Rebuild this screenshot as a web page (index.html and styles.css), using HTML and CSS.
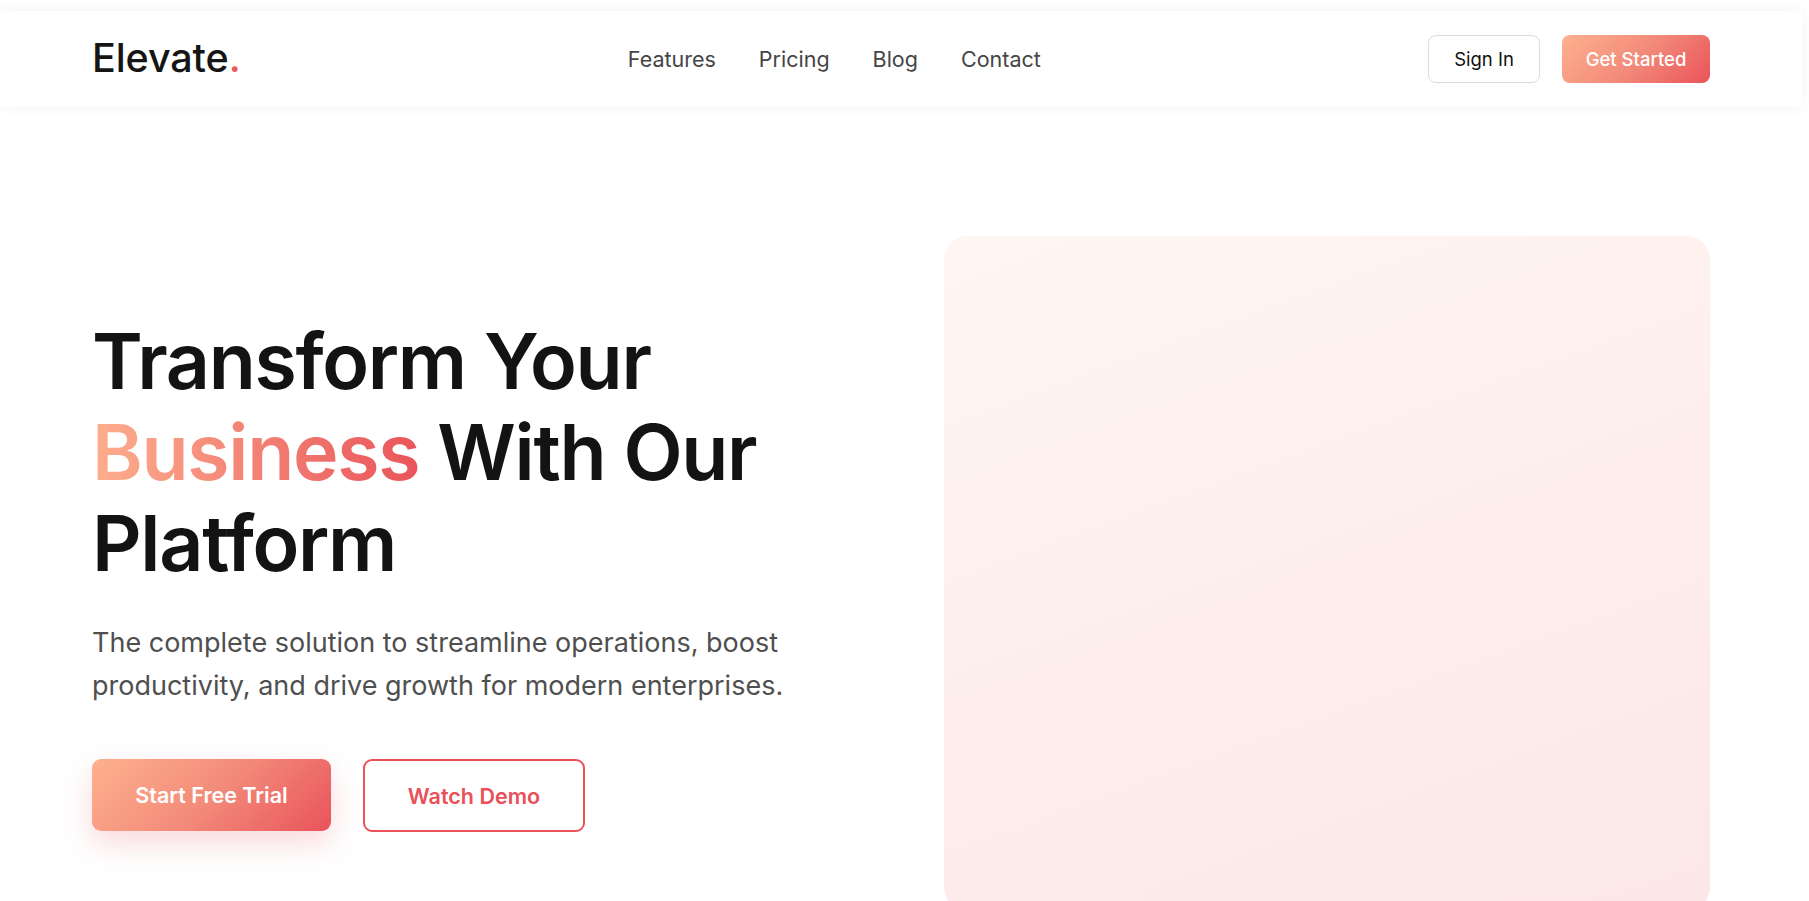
FILE: index.html
```html
<!DOCTYPE html>
<html lang="en">
<head>
<meta charset="utf-8">
<title>Elevate</title>
<link rel="stylesheet" href="styles.css">
</head>
<body>
<div class="page">
  <header class="header">
    <a class="logo" href="#">Elevate<span class="logo-dot">.</span></a>
    <nav class="nav">
      <a href="#">Features</a>
      <a href="#">Pricing</a>
      <a href="#">Blog</a>
      <a href="#">Contact</a>
    </nav>
    <div class="actions">
      <a class="btn-outline" href="#">Sign In</a>
      <a class="btn-grad" href="#">Get Started</a>
    </div>
  </header>
  <main class="hero">
    <div class="hero-text">
      <h1 class="title">Transform Your <span class="accent">Business</span> With Our Platform</h1>
      <p class="lead">The complete solution to streamline operations, boost productivity, and drive growth for modern enterprises.</p>
      <div class="cta">
        <a class="cta-primary" href="#">Start Free Trial</a>
        <a class="cta-secondary" href="#">Watch Demo</a>
      </div>
    </div>
    <div class="hero-visual"></div>
  </main>
</div>
</body>
</html>
```
FILE: styles.css
```css
* { box-sizing: border-box; }
html, body { margin: 0; padding: 0; background: #fff; }
body {
  font-family: Inter, "Noto Sans", "Liberation Sans", sans-serif;
  color: #111;
  overflow: hidden;
}
a { text-decoration: none; }

.page { width: 1802px; }

.header {
  margin-top: 11px;
  height: 96px;
  padding: 0 92px;
  display: flex;
  align-items: center;
  justify-content: space-between;
  background: #fff;
  box-shadow: 0 0 14px rgba(0, 0, 0, 0.05);
  position: relative;
  z-index: 2;
}
.logo {
  font-size: 39.5px;
  font-weight: 500;
  color: #151515;
  letter-spacing: -0.1px;
  line-height: 1;
}
.logo-dot { color: #ea5a5e; }

.nav { display: flex; gap: 43px; }
.nav a {
  font-size: 21.5px;
  color: #454545;
  font-weight: 400;
}

.actions { display: flex; align-items: center; gap: 22px; }
.btn-outline {
  width: 112px;
  height: 48px;
  display: flex;
  align-items: center;
  justify-content: center;
  border: 1px solid #dcdcdc;
  border-radius: 8px;
  color: #111;
  font-size: 18.5px;
}
.btn-grad {
  width: 148px;
  height: 48px;
  display: flex;
  align-items: center;
  justify-content: center;
  border-radius: 8px;
  color: #fff;
  font-size: 18.5px;
  font-weight: 500;
  background: linear-gradient(135deg, #fdb18f 0%, #f38b7a 50%, #e9535a 100%);
}

.hero {
  margin-top: 129px;
  padding: 0 92px;
  display: grid;
  grid-template-columns: 1fr 1fr;
  gap: 86px;
  align-items: center;
}
.title {
  margin: 0;
  font-size: 77px;
  line-height: 91px;
  font-weight: 600;
  color: #131313;
  letter-spacing: -1.3px;
}
.accent {
  display: inline-block;
  line-height: 91px;
  background: linear-gradient(90deg, #fdae8d 0%, #f27d72 55%, #e9545a 100%);
  -webkit-background-clip: text;
  background-clip: text;
  color: transparent;
}
.lead {
  margin: 32px 0 0;
  max-width: 720px;
  font-size: 27px;
  line-height: 43px;
  color: #4f4f4f;
  font-weight: 400;
}
.cta {
  margin-top: 52px;
  display: flex;
  gap: 32px;
}
.cta-primary {
  width: 239px;
  height: 72px;
  display: flex;
  align-items: center;
  justify-content: center;
  border-radius: 9px;
  color: #fff;
  font-size: 21.5px;
  font-weight: 600;
  background: linear-gradient(135deg, #fdb18f 0%, #f38b7a 50%, #e9535a 100%);
  box-shadow: 0 12px 30px rgba(233, 84, 90, 0.22);
}
.cta-secondary {
  width: 222px;
  height: 73px;
  display: flex;
  align-items: center;
  justify-content: center;
  border: 2px solid #ea5158;
  border-radius: 9px;
  color: #e9505a;
  font-size: 21.5px;
  font-weight: 600;
  padding-top: 2px;
}
.hero-visual {
  height: 675px;
  border-radius: 24px;
  background: linear-gradient(160deg, #fff6f1 0%, #fdeeec 50%, #fbe7e7 100%);
}
```
